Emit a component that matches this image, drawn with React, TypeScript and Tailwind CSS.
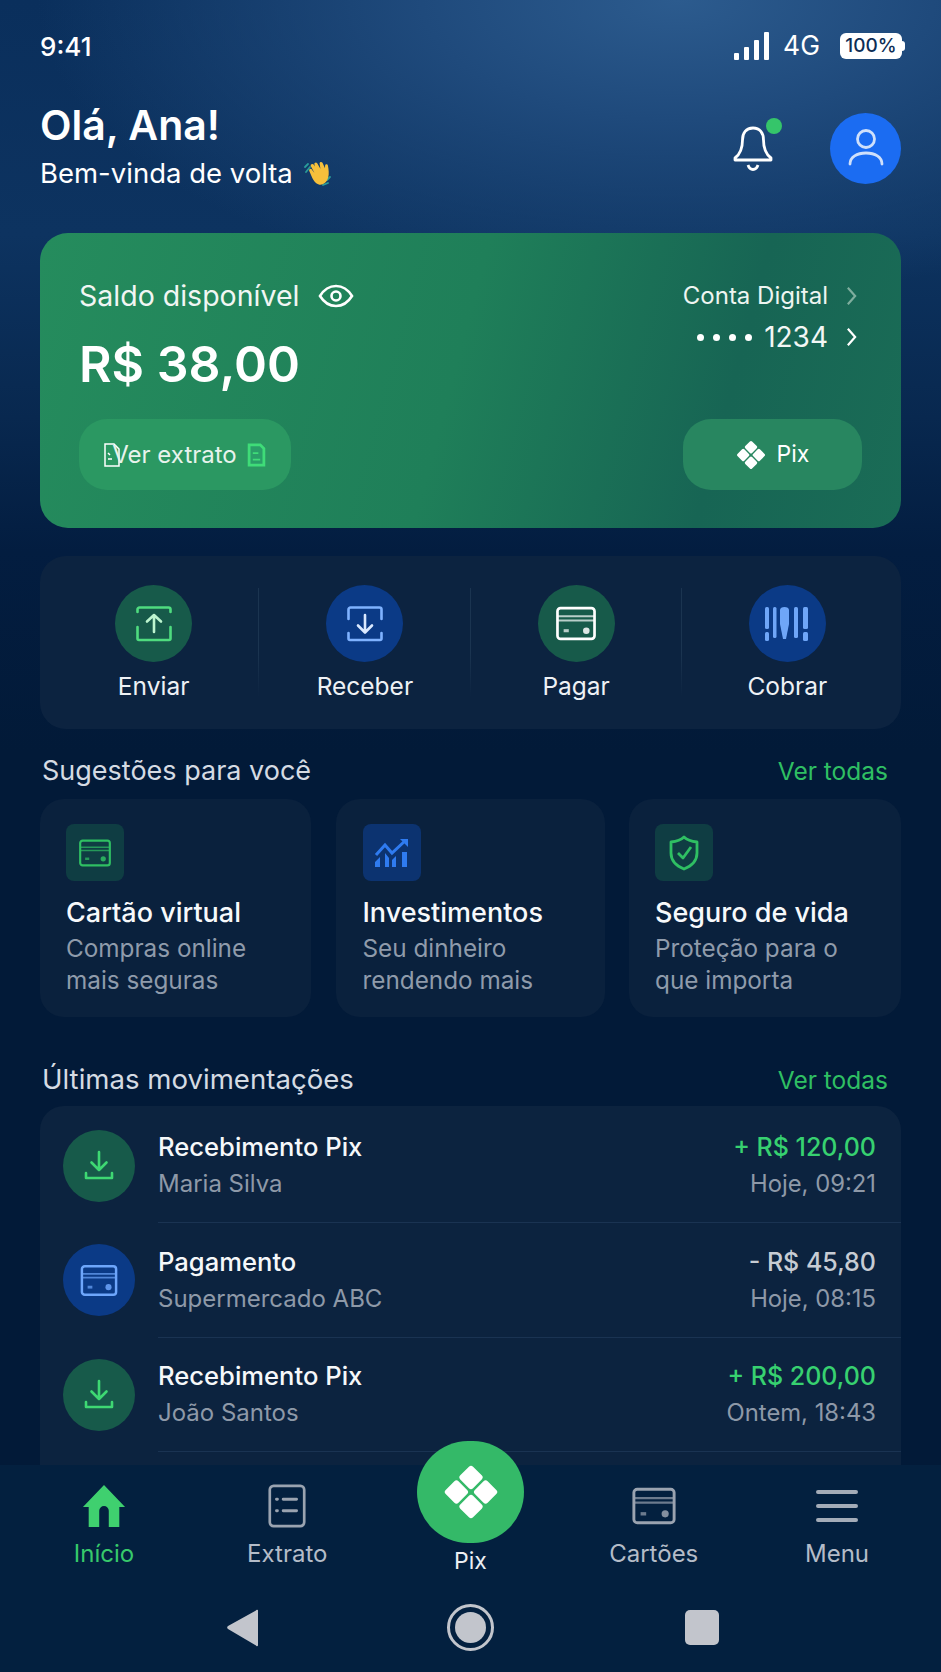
import React from "react";

type IconProps = { className?: string };

function PixMark({ className }: IconProps) {
  return (
    <svg viewBox="0 0 48 48" className={className} fill="currentColor">
      {[
        [24, 11.5],
        [24, 36.5],
        [11.5, 24],
        [36.5, 24],
      ].map(([cx, cy]) => (
        <rect key={`${cx}-${cy}`} x={cx - 7.75} y={cy - 7.75} width="15.5" height="15.5" rx="2.5" transform={`rotate(45 ${cx} ${cy})`} />
      ))}
    </svg>
  );
}

function CardIcon({ className }: IconProps) {
  return (
    <svg viewBox="0 0 40 34" className={className} fill="none" stroke="currentColor" strokeWidth="2.6">
      <rect x="2" y="2" width="36" height="30" rx="3" />
      <path d="M2 10h36M2 14h36" strokeWidth="2" opacity="0.7" />
      <path d="M8 24h5" strokeWidth="3" opacity="0.7" />
      <circle cx="30" cy="24" r="3.200" fill="currentColor" stroke="none" opacity="0.85" />
    </svg>
  );
}

function DownloadTray({ className }: IconProps) {
  return (
    <svg viewBox="0 0 32 32" className={className} fill="none" stroke="currentColor" strokeWidth="2.600" strokeLinecap="round" strokeLinejoin="round">
      <path d="M16 2v18M8.500 12.500 16 20l7.500-7.500" />
      <path d="M3 23v5h26v-5" />
    </svg>
  );
}

function WaveHand({ className }: IconProps) {
  return (
    <svg viewBox="0 0 30 30" className={className}>
      <path d="M7 9 3 14M5 6 2 9" stroke="#2a9d9a" strokeWidth="1.800" strokeLinecap="round" />
      <path d="M24 22l3-3M20 27l5-2" stroke="#2a9d9a" strokeWidth="1.800" strokeLinecap="round" />
      <path d="M8 6.500c1-1 2.400-.6 3 .4l1 1.700-.6-2.400c-.4-1.500 1.800-2.500 2.800-1l3.200 5.600-.8-5.300c-.2-1.600 2-2.300 2.900-.7l2.500 5.500.1-2.600c.1-1.700 2.400-1.900 2.800-.2.800 4 1.300 8.600.3 12-1.400 4.900-5.400 8-9.400 7-3.200-.8-5-3.500-6.500-6.400L6.300 13c-.8-1.500 1.100-2.900 2.300-1.700l2.900 3.600L8 8.500c-.4-.7-.5-1.400 0-2z" fill="#f6bf3b" />
    </svg>
  );
}

function SectionHeader({ title, titleSize }: { title: string; titleSize: string }) {
  return (
    <div className="flex h-9 items-center justify-between pl-[2px] pr-[13px]">
      <span className={`${titleSize} text-[#d5dbe3]`}>{title}</span>
      <span className="text-[24.500px] text-[#2fbf63]">Ver todas</span>
    </div>
  );
}

const actions = [
  {
    label: "Enviar",
    bg: "bg-[#175a4a]",
    icon: (
      <svg viewBox="0 0 36 36" className="h-[36px] w-[36px]" fill="none" strokeWidth="2.600" strokeLinecap="round" strokeLinejoin="round">
        <path d="M1.500 6V3.500a2 2 0 0 1 2-2h29a2 2 0 0 1 2 2V6M1.500 21v11.500a1.500 1.500 0 0 0 1.500 1.500h30a1.500 1.500 0 0 0 1.500-1.500V21" stroke="#4fdc7f" />
        <path d="M18 26V9M11 15.500 18 9l7 6.500" stroke="#bdf5cf" />
      </svg>
    ),
  },
  {
    label: "Receber",
    bg: "bg-[#0b3a86]",
    icon: (
      <svg viewBox="0 0 36 36" className="h-[36px] w-[36px]" fill="none" strokeWidth="2.600" strokeLinecap="round" strokeLinejoin="round">
        <path d="M1.500 13V3.500a2 2 0 0 1 2-2h29a2 2 0 0 1 2 2V13M1.500 27v5.500a1.500 1.500 0 0 0 1.500 1.500h30a1.500 1.500 0 0 0 1.500-1.500V27" stroke="#7fb2ff" />
        <path d="M18 9v17M11 19.500l7 7 7-7" stroke="#dbe9ff" />
      </svg>
    ),
  },
  { label: "Pagar", bg: "bg-[#175a4a]", icon: <CardIcon className="h-[35px] w-[42px] text-white" /> },
  {
    label: "Cobrar",
    bg: "bg-[#0b3a86]",
    icon: (
      <svg viewBox="0 0 44 36" className="h-[36px] w-[44px]" fill="#6fa6f8">
        <rect x="0" y="1" width="4" height="22" rx="1.500" />
        <rect x="0" y="26" width="4" height="9" rx="1.500" />
        <rect x="8" y="1" width="3.500" height="31" rx="1.500" />
        <path d="M15 4c0-2 2-3 4.500-3S24 2 24 4v14l-3 15h-3l-3-15z" />
        <rect x="29" y="1" width="4" height="31" rx="1.500" />
        <rect x="38" y="1" width="5" height="22" rx="1.500" />
        <rect x="38" y="26" width="5" height="9" rx="1.500" />
      </svg>
    ),
  },
];

const suggestions = [
  {
    title: "Cartão virtual",
    lines: ["Compras online", "mais seguras"],
    tile: "bg-[#0f3d43]",
    icon: <CardIcon className="h-[28px] w-[34px] text-[#2fbf63]" />,
    box: "w-[271px] pl-[26px]",
  },
  {
    title: "Investimentos",
    lines: ["Seu dinheiro", "rendendo mais"],
    tile: "bg-[#0c3370]",
    box: "w-[269px] pl-[27px]",
    icon: (
      <svg viewBox="0 0 36 30" className="h-[30px] w-[36px]" fill="none">
        <path d="M2 17 11 7l7 8L32 2" stroke="#2f7bf0" strokeWidth="3" />
        <path d="M26 1h8v8z" fill="#2f7bf0" />
        <path d="M1 29v-5l5-5v10zM11 29V15l4 5v9zM18 29v-7l4-4v11zM28 29V14h5v15z" fill="#2f7bf0" />
      </svg>
    ),
  },
  {
    title: "Seguro de vida",
    lines: ["Proteção para o", "que importa"],
    tile: "bg-[#0f3d43]",
    box: "w-[272px] pl-[26px]",
    icon: (
      <svg viewBox="0 0 32 36" className="h-[36px] w-[32px]" fill="none" stroke="#2fbf63" strokeWidth="2.800" strokeLinejoin="round">
        <path d="M16 2c3 3 8 4.500 13 5v11c0 7.500-5.500 13-13 16C8.500 31 3 25.500 3 18V7c5-.5 10-2 13-5z" />
        <path d="m10 18 5 5 8-11" />
      </svg>
    ),
  },
];

const movements = [
  { title: "Recebimento Pix", who: "Maria Silva", amount: "+ R$ 120,00", when: "Hoje, 09:21", kind: "in" },
  { title: "Pagamento", who: "Supermercado ABC", amount: "- R$ 45,80", when: "Hoje, 08:15", kind: "out" },
  { title: "Recebimento Pix", who: "João Santos", amount: "+ R$ 200,00", when: "Ontem, 18:43", kind: "in" },
];

function NavItem({ label, active, icon }: { label: string; active?: boolean; icon: React.ReactNode }) {
  return (
    <div className="flex w-[172px] flex-col items-center">
      <div className="flex h-[46px] items-center justify-center">{icon}</div>
      <span className={`mt-[7px] text-[24px] ${active ? "text-[#37c96b]" : "text-[#b4bcc8]"}`}>{label}</span>
    </div>
  );
}

export default function App() {
  return (
    <div
      className="flex h-[1672px] w-[941px] flex-col overflow-hidden bg-[radial-gradient(ellipse_640px_300px_at_72%_0%,#2c5b8e_0%,#1f4a7c_40%,transparent_100%),linear-gradient(180deg,#0a2f5c_0%,#0d3360_14%,#08284f_25%,#031d40_33%,#021a38_45%,#021a38_100%)] text-white"
      style={{ fontFamily: "Inter, 'Noto Sans', sans-serif" }}
    >
      <main className="h-[1465px] shrink-0 overflow-hidden px-[40px]">
        {/* status bar */}
        <div className="mt-[30px] flex h-8 items-center justify-between">
          <span className="text-[26px] font-medium">9:41</span>
          <div className="-mr-[4px] flex items-center">
            <svg viewBox="0 0 36 28" className="h-[28px] w-[36px]" fill="white">
              <rect x="0" y="21" width="5" height="7" rx="1" />
              <rect x="10" y="15" width="5" height="13" rx="1" />
              <rect x="20" y="8" width="5" height="20" rx="1" />
              <rect x="30" y="0" width="5" height="28" rx="1" />
            </svg>
            <span className="ml-[13px] text-[26.500px] font-normal">4G</span>
            <div className="ml-[20px] flex items-center">
              <span className="flex h-[26px] w-[62px] items-center justify-center rounded-[6px] bg-white text-[19px] font-medium text-[#0d2d55]">100%</span>
              <span className="h-[10px] w-[3px] rounded-r-sm bg-white" />
            </div>
          </div>
        </div>

        {/* greeting */}
        <div className="mt-[50px] flex h-[72px] items-center justify-between">
          <div className="-mt-[10px] flex flex-col self-start">
            <span className="text-[41px] font-semibold leading-[46px]">Olá, Ana!</span>
            <div className="mt-[8px] flex items-center gap-[10px]">
              <span className="text-[27.500px] leading-[34px]">Bem-vinda de volta</span>
              <WaveHand className="h-[30px] w-[30px]" />
            </div>
          </div>
          <div className="flex items-center">
            <div className="relative mr-[56px]">
              <svg viewBox="0 0 42 48" className="h-[48px] w-[42px]" fill="none" stroke="white" strokeWidth="2.800" strokeLinejoin="round">
                <path d="M21 4c-7 0-10.500 5-10.500 12 0 9-2 14-7.500 18v2h36v-2c-5.500-4-7.500-9-7.500-18C31.500 9 28 4 21 4z" />
                <path d="M16 41c1 3 3 4.500 5 4.500s4-1.500 5-4.500" />
              </svg>
              <span className="absolute right-[-8px] top-[-6px] h-4 w-4 rounded-full bg-[#35c56a]" />
            </div>
            <div className="flex h-[71px] w-[71px] items-center justify-center rounded-full bg-[#1b6cf2]">
              <svg viewBox="0 0 38 40" className="h-[40px] w-[38px]" fill="none" stroke="#cfe0fb" strokeWidth="2.800">
                <circle cx="19" cy="11" r="8.500" />
                <path d="M3 36c0-7 7-11 16-11s16 4 16 11" strokeLinecap="round" />
              </svg>
            </div>
          </div>
        </div>

        {/* balance card */}
        <section className="mt-[49px] flex h-[295px] flex-col rounded-[28px] bg-[linear-gradient(105deg,#258c5d_0%,#1f7f59_48%,#176554_78%,#1a6c56_100%)] px-[39px]">
          <div className="mt-[45px] flex items-start justify-between">
            <div>
              <div className="flex h-[36px] items-center">
                <span className="text-[28.500px] text-[#f1f6f3]">Saldo disponível</span>
                <svg viewBox="0 0 36 24" className="ml-[19px] h-[24px] w-[36px]" fill="none" stroke="white" strokeWidth="2.600">
                  <path d="M2 12C6 5.500 11 2 18 2s12 3.500 16 10c-4 6.500-9 10-16 10S6 18.500 2 12z" />
                  <circle cx="18" cy="12" r="4.500" />
                </svg>
              </div>
              <div className="mt-[21px] text-[50px] font-semibold leading-[58px]">R$ 38,00</div>
            </div>
            <div className="mr-[5px] flex flex-col items-end">
              <div className="flex h-[36px] items-center">
                <span className="text-[24px] text-[#eef5f1]">Conta Digital</span>
                <svg viewBox="0 0 12 22" className="ml-[18px] h-[20px] w-[11px]" fill="none" stroke="#7fae9e" strokeWidth="2.400">
                  <path d="m2 2 8 9-8 9" />
                </svg>
              </div>
              <div className="mt-[5px] flex h-[36px] items-center">
                <span className="flex gap-[9px]">
                  {[0, 1, 2, 3].map((i) => (
                    <span key={i} className="h-[7px] w-[7px] rounded-full bg-white" />
                  ))}
                </span>
                <span className="ml-[12px] text-[28px] text-[#f3f7f5]">1234</span>
                <svg viewBox="0 0 12 22" className="ml-[18px] h-[20px] w-[11px]" fill="none" stroke="white" strokeWidth="2.400">
                  <path d="m2 2 8 9-8 9" />
                </svg>
              </div>
            </div>
          </div>
          <div className="mt-auto mb-[38px] flex items-center justify-between">
            <div className="flex h-[71px] w-[212px] items-center justify-center rounded-[28px] bg-[#2b9862]">
              <svg viewBox="0 0 18 24" className="mr-[-9px] h-[24px] w-[18px]" fill="none" stroke="white" strokeWidth="1.500">
                <path d="M2 1h9l5 5v17H2z" />
                <path d="m5 10 2 2M5 16h4" />
              </svg>
              <span className="text-[24px] text-[#e7f3ec]">Ver extrato</span>
              <svg viewBox="0 0 20 26" className="ml-[9px] h-[24px] w-[21px]" fill="#2a9f68" stroke="#3fdc78" strokeWidth="3">
                <path d="M2 2h12l4 4v18H2z" />
                <path d="M6 11h6M6 18h8" strokeWidth="2" />
              </svg>
            </div>
            <div className="flex h-[71px] w-[179px] items-center justify-center gap-[11px] rounded-[28px] bg-[#288660]">
              <PixMark className="h-[30px] w-[30px] text-white" />
              <span className="text-[23px]">Pix</span>
            </div>
          </div>
        </section>

        {/* quick actions */}
        <section className="mt-[28px] grid h-[173px] grid-cols-4 rounded-[26px] bg-[#0c2340] px-[8px] pt-[29px]">
          {actions.map((a, i) => (
            <div key={a.label} className="relative flex flex-col items-center">
              <div className={`flex h-[77px] w-[77px] items-center justify-center rounded-full ${a.bg}`}>{a.icon}</div>
              <span className="mt-[7px] text-[24.500px] leading-[34px] text-[#eef1f5]">{a.label}</span>
              {i < 3 && <span className="absolute bottom-[32px] right-0 top-[3px] w-px bg-[linear-gradient(180deg,#1b3450_0%,#1b3450_60%,transparent_100%)]" />}
            </div>
          ))}
        </section>

        {/* suggestions */}
        <div className="mt-[24px]">
          <SectionHeader title="Sugestões para você" titleSize="text-[27px]" />
        </div>
        <section className="mt-[10px] flex h-[218px] justify-between">
          {suggestions.map((s) => (
            <div key={s.title} className={`${s.box} rounded-[24px] bg-[#0a213d] pt-[25px]`}>
              <div className={`flex h-[57px] w-[58px] items-center justify-center rounded-[8px] ${s.tile}`}>{s.icon}</div>
              <div className="mt-[14px] text-[27px] font-medium leading-[36px] text-[#f7f9fb]">{s.title}</div>
              <div className="mt-[2px] text-[24.300px] leading-[31.500px] text-[#8f9bab]">
                {s.lines.map((l) => (
                  <div key={l}>{l}</div>
                ))}
              </div>
            </div>
          ))}
        </section>

        {/* last movements */}
        <div className="mt-[45px]">
          <SectionHeader title="Últimas movimentações" titleSize="text-[27.600px]" />
        </div>
        <section className="mt-[8px] h-[400px] rounded-t-[24px] bg-[#0c233f] pt-[3px]">
          {movements.map((m) => (
            <div key={m.title + m.who} className="h-[114.500px]">
              <div className="flex h-[113px] items-center pl-[23px] pr-[25px]">
                <div className={`flex h-[72px] w-[72px] shrink-0 items-center justify-center rounded-full ${m.kind === "in" ? "bg-[#175a4a]" : "bg-[#0b3a86]"}`}>
                  {m.kind === "in" ? (
                    <DownloadTray className="h-[34px] w-[32px] text-[#3ed873]" />
                  ) : (
                    <CardIcon className="h-[33px] w-[38px] text-[#6ea6fb]" />
                  )}
                </div>
                <div className="ml-[23px] flex-1">
                  <div className="text-[25.600px] font-medium leading-[36px] text-[#f6f8fa]">{m.title}</div>
                  <div className="text-[24px] leading-[37px] text-[#8e99a8]">{m.who}</div>
                </div>
                <div className="text-right">
                  <div className={`text-[25px] font-medium leading-[36px] ${m.kind === "in" ? "text-[#37d170]" : "text-[#c7ccd4]"}`}>{m.amount}</div>
                  <div className="text-[23.800px] leading-[37px] text-[#8e99a8]">{m.when}</div>
                </div>
              </div>
              <div className="ml-[118px] h-px bg-[#1a3352]" />
            </div>
          ))}
        </section>
      </main>

      {/* bottom nav */}
      <nav className="relative h-[207px] bg-[#03203f]">
        <div className="flex justify-between pl-[18px] pr-[18px] pt-[18px]">
          <NavItem
            label="Início"
            active
            icon={
              <svg viewBox="0 0 46 46" className="h-[46px] w-[44px]" fill="#3fd06f">
                <path d="M23 1 45 24h-6v21H28V28a5 5 0 0 0-10 0v17H7V24H1z" />
              </svg>
            }
          />
          <NavItem
            label="Extrato"
            icon={
              <svg viewBox="0 0 40 46" className="h-[44px] w-[40px]" fill="none" stroke="#9aa3b0" strokeWidth="2.800" strokeLinecap="round">
                <rect x="2" y="2" width="36" height="42" rx="4" />
                <path d="M9 16h1M16 16h14M9 28h1M16 28h14" strokeWidth="3" />
              </svg>
            }
          />
          <div className="w-[172px]" />
          <NavItem label="Cartões" icon={<CardIcon className="h-[38px] w-[46px] text-[#9aa3b0]" />} />
          <NavItem
            label="Menu"
            icon={
              <svg viewBox="0 0 42 36" className="h-[36px] w-[42px]" stroke="#a4acb8" strokeWidth="4" strokeLinecap="round">
                <path d="M2 4h38M2 18h38M2 32h38" />
              </svg>
            }
          />
        </div>
        <div className="absolute left-[417px] top-[-24px] flex w-[107px] flex-col items-center">
          <div className="flex h-[102px] w-[107px] items-center justify-center rounded-full bg-[#34b968]">
            <PixMark className="h-[56px] w-[56px] text-white" />
          </div>
          <span className="mt-[1px] text-[23px] text-[#eceff3]">Pix</span>
        </div>
        <div className="absolute inset-x-0 top-[139px] flex items-center justify-center pl-[4px]">
          <svg viewBox="0 0 34 38" className="h-[38px] w-[34px]" fill="#c2c5cc">
            <path d="M32 2v34a1 1 0 0 1-2 .5L2 20a2 2 0 0 1 0-3L30 1.500A1 1 0 0 1 32 2z" />
          </svg>
          <div className="ml-[187px] flex h-[47px] w-[47px] items-center justify-center rounded-full border-[3px] border-[#c2c5cc]">
            <div className="h-[31px] w-[31px] rounded-full bg-[#c2c5cc]" />
          </div>
          <div className="ml-[191px] h-[35px] w-[34px] rounded-[5px] bg-[#c2c5cc]" />
        </div>
      </nav>
    </div>
  );
}
